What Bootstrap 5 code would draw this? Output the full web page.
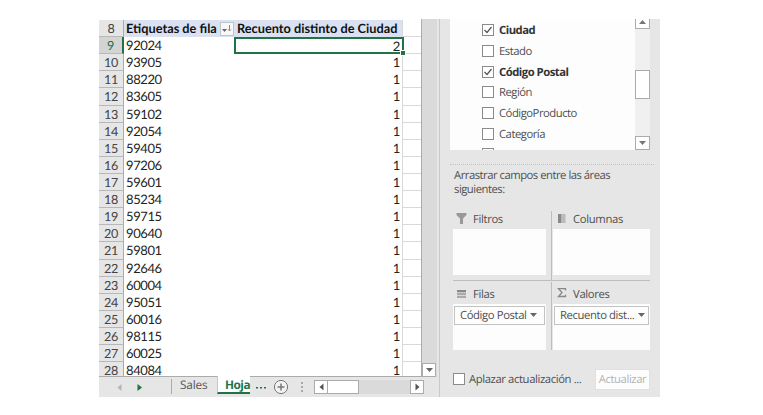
<!DOCTYPE html>
<html lang="es">
<head>
<meta charset="utf-8">
<meta name="viewport" content="width=device-width, initial-scale=1">
<title>Tabla dinámica</title>
<link href="https://cdn.jsdelivr.net/npm/bootstrap@5.3.0/dist/css/bootstrap.min.css" rel="stylesheet">
<style>
body{background:#fff;overflow:hidden;text-rendering:geometricPrecision}
svg{display:block;flex:none}
.app{margin:19px 0 0 99px;width:561px;height:378px;background:#e6e6e6}
/* worksheet */
.book{width:338px}
.sheet{width:323px;height:358px;background:#fff;border-right:1px solid #ababab;border-bottom:1px solid #ababab;padding-top:1px;font-family:Lato,"Liberation Sans",sans-serif;font-size:13px;letter-spacing:-.4px;color:#222}
.line{height:17.12px;line-height:17.6px}
.line:last-child{height:16px;line-height:17px}
.line:last-child .num,.line:last-child .cc{border-bottom:0}
.num{width:25px;background:#e6e6e6;border-right:1px solid #ababab;border-bottom:1px solid #b8b8b8;color:#444;text-align:center;font-size:12.6px}
.ca{width:110px;padding-left:2px}
.cb{width:169px;padding-right:2px;text-align:right;border-right:1px solid #d9d9d9}
.cc{width:18px;border-bottom:1px solid #d9d9d9}
.headline .ca,.headline .cb{background:#d9e1f2;font-weight:700;color:#111;white-space:nowrap;font-size:12.75px;letter-spacing:0}
.headline .cb{text-align:left;padding-left:3px;padding-right:0}
.sortbtn{width:14px;height:14px;background:#f8f8f8;border:1px solid #bfc3ca}
.current .num{background:#d4d4d4;color:#217346;border-right:2px solid #217346}
.current .cb{border:2px solid #217346;padding-right:2px;line-height:14px;margin-right:-1px;width:170px;position:relative}
.current .cb::after{content:"";position:absolute;right:-3px;bottom:-3px;width:4px;height:4px;background:#217346;outline:1px solid #fff}
.vtrack{width:15px;height:358px;background:#dadada}
.sbtn{background:#fff;border:1px solid #ababab;display:flex;align-items:center;justify-content:center;flex:none}
/* sheet tabs */
.tabs{height:20px;font-family:"Open Sans","Noto Sans",sans-serif;font-size:11.8px;line-height:16px;color:#555;letter-spacing:-.35px}
.tabsep{width:1px;height:15px;background:#ababab;margin:2px 8px 0 20px}
.seltab{width:33px;height:18px;margin-top:-1px;background:#fff;border-bottom:2px solid #217346;padding-left:7px;font-weight:700;color:#217346;border-left:1px solid #c6c6c6;letter-spacing:-.5px;line-height:18px}
.htrack{width:110px;height:14px;background:#dadada;margin-top:3px}
/* field pane */
.pane{width:221px;border-left:1px solid #c9c9c9;padding-left:10px;font-family:"Open Sans","Noto Sans",sans-serif;font-size:11.3px;letter-spacing:-.5px;color:#505050;white-space:nowrap}
.fields{width:200px;height:131px;background:#fdfdfd}
.fieldlist{padding:1.4px 0 0 32px}
.field{height:20.7px;gap:5px}
.field b,.field span{padding-top:2px}
.field b{color:#333}
.box{width:12px;height:12px;margin-top:-1px;border:1px solid #8b8b8b;background:#fff;flex:none}
.ftrack{width:15px;background:#f0f0f0}
.dots{width:204px;border-top:1px dotted #c2c2c2;margin-top:14px}
.hint{margin:4px 0 0 4px;line-height:14px}
.areas{margin:14px 0 0 3px;width:197px;height:140px}
.left{width:93px}
.right{width:97px}
.bar{width:1px;background:#bdbdbd;margin:0 1px 0 5px}
.lab{height:18px;line-height:18px;letter-spacing:-.35px}
.drop{height:46px;background:#fdfdfd}
.rule{height:1px;background:#bdbdbd;width:197px;margin-bottom:1px}
.pill{height:19px;border:1px solid #c3c3c3;background:#fdfdfd;margin:-2px 1px 0;padding-left:5px;line-height:17px;letter-spacing:-.4px}
.act{width:55px;height:21px;background:#fdfdfd;border:1px solid #e0e0e0;color:#b4b4b4;line-height:20px;text-align:center;letter-spacing:-.4px}
.defer{margin:17px 0 0 3px;width:197px;line-height:20px;letter-spacing:-.4px}
.defer span{padding-top:2px}
</style>
</head>
<body>
<div class="app d-flex overflow-hidden">
  <div class="book me-0 flex-shrink-0">
    <div class="d-flex">
      <div class="sheet overflow-hidden" id="sheet">
        <div class="line headline d-flex">
          <div class="num">8</div>
          <div class="ca d-flex align-items-center justify-content-between"><span>Etiquetas de fila</span>
            <div class="sortbtn"><svg width="12" height="12" viewBox="0 0 12 12"><path d="M1 6h5L3.500 9z" fill="#666"/><path d="M8.500 2v6M7.200 6.500l1.300 1.500 1.300-1.500" fill="none" stroke="#888"/></svg></div>
          </div>
          <div class="cb">Recuento distinto de Ciudad</div><div class="cc"></div>
        </div>
      </div>
      <div class="vtrack d-flex align-items-end"><div class="sbtn" style="width:14px;height:14px"><svg width="8" height="5"><path d="M1 0h7L4.500 4z" fill="#666"/></svg></div></div>
    </div>
    <div class="tabs d-flex">
      <svg width="52" height="20"><path d="M22.500 7v7L18.500 10.500z" fill="#b5b5b5"/><path d="M38.500 7v7L43 10.500z" fill="#217346"/></svg>
      <div class="tabsep"></div>
      <div style="width:37px;letter-spacing:-.15px">Sales</div>
      <div class="seltab">Hoja</div>
      <svg width="64" height="20"><path d="M6 10h2v1.500H6zM10 10h2v1.500h-2zM14 10h2v1.500h-2z" fill="#217346"/><circle cx="31" cy="10" r="6.600" fill="#f2f2f2" stroke="#777"/><path d="M31 6.500v7M27.500 10h7" stroke="#777" stroke-width="1.500"/><path d="M51 5h2v2h-2zM51 9h2v2h-2zM51 13h2v2h-2z" fill="#a9a9a9"/></svg>
      <div class="htrack d-flex justify-content-between"><div class="d-flex"><div class="sbtn" style="width:14px"><svg width="5" height="8"><path d="M4.500 .5v7L.5 4z" fill="#555"/></svg></div><div class="sbtn border-start-0" style="width:31px"></div></div><div class="sbtn" style="width:14px"><svg width="5" height="8"><path d="M.5 .5v7l4-3.500z" fill="#555"/></svg></div></div>
    </div>
  </div>
  <div class="pane ms-auto">
    <div class="fields d-flex justify-content-between overflow-hidden">
      <div class="fieldlist" id="fields"></div>
      <div class="ftrack d-flex flex-column">
        <div class="sbtn" style="height:14px;margin-top:-4px"><svg width="7" height="4"><path d="M0 4h7L3.500 0z" fill="#777"/></svg></div>
        <div class="sbtn" style="height:29px;margin-top:41px"></div>
        <div class="sbtn mt-auto" style="height:14px"><svg width="7" height="4"><path d="M0 0h7L3.500 4z" fill="#777"/></svg></div>
      </div>
    </div>
    <div class="dots"></div>
    <div class="hint">Arrastrar campos entre las áreas<br>siguientes:</div>
    <div class="areas d-flex flex-column">
      <div class="d-flex">
        <div class="left"><div class="lab d-flex"><svg width="20" height="18"><path d="M3.500 2h10v2L10 7.500V13H7V7.500L3.500 4z" fill="#999"/></svg>Filtros</div><div class="drop"></div></div>
        <div class="bar"></div>
        <div class="right"><div class="lab d-flex"><svg width="20" height="18"><path d="M5 3h3.500v9H5z" fill="#888"/><path d="M9 3h3.500v9H9z" fill="#bbb"/></svg>Columnas</div><div class="drop"></div></div>
      </div>
      <div class="d-flex"><div class="left" style="height:5px"></div><div class="bar"></div></div>
      <div class="rule"></div>
      <div class="d-flex">
        <div class="left"><div class="lab pt-1 mb-1 d-flex"><svg width="20" height="18"><path d="M4 4h9v2.200H4z" fill="#888"/><path d="M4 6.800h9v2.300H4zM4 9.700h9V12H4z" fill="#aaa"/></svg>Filas</div><div class="drop pt-1"><div class="pill d-flex align-items-center">Código Postal<svg class="ms-1" width="8" height="5"><path d="M0 0h7L3.500 4z" fill="#666"/></svg></div></div></div>
        <div class="bar"></div>
        <div class="right"><div class="lab pt-1 mb-1 d-flex"><svg width="20" height="18"><path d="M12.500 4.500V2.700H5.500L9 6.500 5.500 10.500h7V8.700" fill="none" stroke="#888" stroke-width="1.300"/></svg>Valores</div><div class="drop pt-1"><div class="pill d-flex align-items-center">Recuento dist...<svg class="ms-1" width="8" height="5"><path d="M0 0h7L3.500 4z" fill="#666"/></svg></div></div></div>
      </div>
    </div>
    <div class="d-flex align-items-center defer"><div class="box me-1"></div><span>Aplazar actualización ...</span><div class="act ms-auto">Actualizar</div></div>
  </div>
</div>
<script src="https://cdn.jsdelivr.net/npm/bootstrap@5.3.0/dist/js/bootstrap.bundle.min.js"></script>
<script>
const codes=['92024','93905','88220','83605','59102','92054','59405','97206','59601','85234','59715','90640','59801','92646','60004','95051','60016','98115','60025','84084'];
document.getElementById('sheet').insertAdjacentHTML('beforeend',codes.map((c,i)=>`<div class="line d-flex${i?'':' current'}"><div class="num">${i+9}</div><div class="ca">${c}</div><div class="cb">${i?1:2}</div><div class="cc"></div></div>`).join(''));
const tick='<svg width="10" height="10"><path d="M1.500 5l2.500 2.500L8.500 2" fill="none" stroke="#555" stroke-width="1.200"/></svg>';
document.getElementById('fields').innerHTML=[['Ciudad',1],['Estado'],['Código Postal',1],['Región'],['CódigoProducto'],['Categoría'],['']].map(([n,on])=>`<div class="field d-flex align-items-center"><div class="box">${on?tick:''}</div>${on?`<b>${n}</b>`:`<span>${n}</span>`}</div>`).join('');
</script>
</body>
</html>
